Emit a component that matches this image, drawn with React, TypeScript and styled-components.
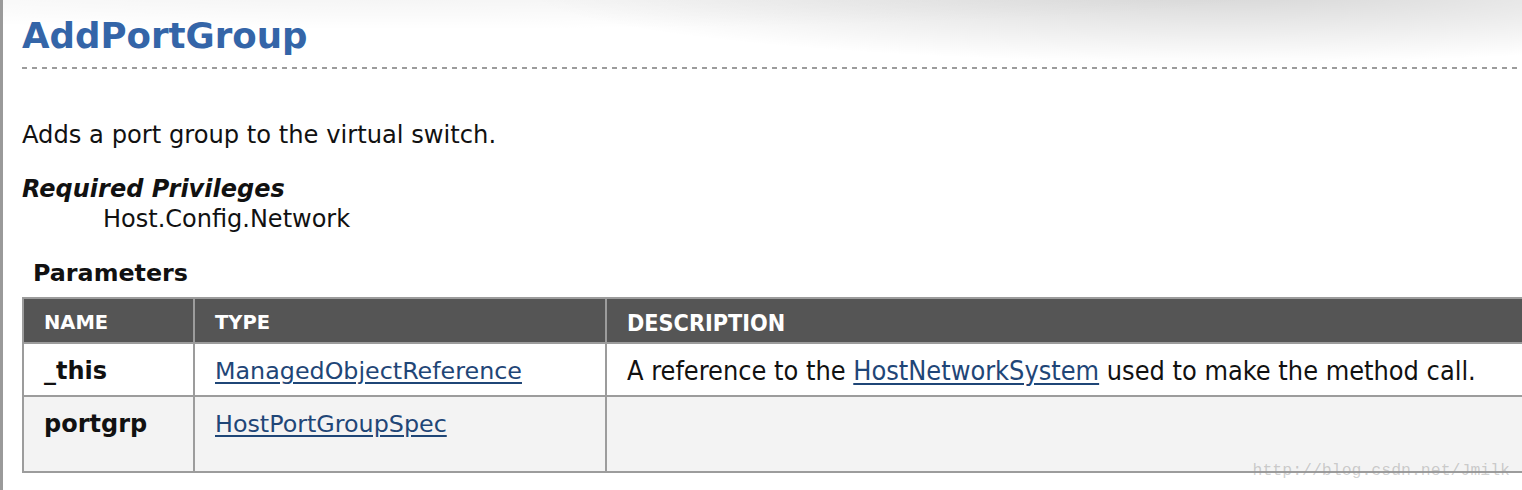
import React from "react";
import styled, { createGlobalStyle } from "styled-components";

const Global = createGlobalStyle`
  html, body { margin: 0; padding: 0; background: #fff; }
  body { font-family: "DejaVu Sans", Verdana, sans-serif; color: #111; overflow: hidden; }
`;

const Page = styled.div`
  position: relative;
  width: 1522px;
  height: 490px;
  box-sizing: border-box;
  overflow: hidden;
  border-left: 3px solid #9a9a9a;
  padding-left: 19px;
  background:
    radial-gradient(ellipse 700px 75px at 1220px -12px, rgba(0,0,0,0.17), rgba(0,0,0,0) 100%),
    radial-gradient(ellipse 900px 40px at 400px -10px, rgba(0,0,0,0.05), rgba(0,0,0,0) 100%),
    #fff;
`;

const Title = styled.h1`
  margin: 0;
  padding-top: 14px;
  font-size: 35.6px;
  line-height: 44px;
  font-weight: bold;
  color: #3465a8;
`;

const Dashed = styled.div`
  margin-top: 9px;
  height: 2px;
  background: repeating-linear-gradient(to right, #9c9c9c 0 5px, transparent 5px 10px);
`;

const Para = styled.p`
  margin: 51px 0 0;
  font-size: 24.2px;
  line-height: 30px;
`;

const PrivTitle = styled.div`
  margin-top: 24px;
  font-size: 24px;
  line-height: 30px;
  font-weight: bold;
  font-style: italic;
`;

const PrivValue = styled.div`
  margin-left: 81px;
  font-size: 24px;
  line-height: 30px;
`;

const SectionTitle = styled.h2`
  margin: 24px 0 0 11px;
  font-size: 23.8px;
  line-height: 30px;
  font-weight: bold;
`;

const Table = styled.table`
  margin-top: 9px;
  width: 1580px;
  border-collapse: collapse;
  table-layout: fixed;
`;

const HeadCell = styled.th<{ $w?: number; $condensed?: boolean }>`
  ${(p) => (p.$w ? `width: ${p.$w}px;` : "")}
  background: #555555;
  color: #fff;
  text-align: left;
  border: 2px solid #9c9c9c;
  height: 45px;
  padding: 4px 20px 0;
  font-size: ${(p) => (p.$condensed ? "23.2px" : "19.5px")};
  font-family: ${(p) =>
    p.$condensed ? `"DejaVu Sans Condensed", "DejaVu Sans", sans-serif` : `"DejaVu Sans", sans-serif`};
  font-weight: bold;
  box-sizing: border-box;
`;

const Row = styled.tr<{ $alt?: boolean }>`
  background: ${(p) => (p.$alt ? "#f3f3f3" : "#fff")};
`;

const Cell = styled.td<{ $tall?: boolean; $condensed?: boolean; $bold?: boolean }>`
  border: 2px solid #9c9c9c;
  vertical-align: top;
  padding: ${(p) => (p.$tall ? "12px 20px 32px" : "12px 20px 9px")};
  font-size: ${(p) => (p.$condensed ? "26.85px" : p.$bold ? "24px" : "23.8px")};
  line-height: 30px;
  font-weight: ${(p) => (p.$bold ? "bold" : "normal")};
  font-family: ${(p) =>
    p.$condensed ? `"DejaVu Sans Condensed", "DejaVu Sans", sans-serif` : `"DejaVu Sans", sans-serif`};
  color: #111;
`;

const Link = styled.a`
  color: #1f4677;
  text-decoration: underline;
  text-underline-offset: 3px;
`;

const Watermark = styled.div`
  position: absolute;
  right: 12px;
  bottom: 10px;
  font-family: "Liberation Mono", "DejaVu Sans Mono", monospace;
  font-size: 16.5px;
  color: rgba(150, 150, 150, 0.45);
  pointer-events: none;
`;

export default function App() {
  return (
    <>
      <Global />
      <Page>
        <Title>AddPortGroup</Title>
        <Dashed />
        <Para>Adds a port group to the virtual switch.</Para>
        <PrivTitle>Required Privileges</PrivTitle>
        <PrivValue>Host.Config.Network</PrivValue>
        <SectionTitle>Parameters</SectionTitle>
        <Table>
          <thead>
            <tr>
              <HeadCell $w={171}>NAME</HeadCell>
              <HeadCell $w={412}>TYPE</HeadCell>
              <HeadCell $condensed>DESCRIPTION</HeadCell>
            </tr>
          </thead>
          <tbody>
            <Row>
              <Cell $bold>_this</Cell>
              <Cell>
                <Link href="#">ManagedObjectReference</Link>
              </Cell>
              <Cell $condensed>
                A reference to the <Link href="#">HostNetworkSystem</Link> used to make the method call.
              </Cell>
            </Row>
            <Row $alt>
              <Cell $bold $tall>portgrp</Cell>
              <Cell $tall>
                <Link href="#">HostPortGroupSpec</Link>
              </Cell>
              <Cell $tall $condensed></Cell>
            </Row>
          </tbody>
        </Table>
        <Watermark>http://blog.csdn.net/Jmilk</Watermark>
      </Page>
    </>
  );
}
